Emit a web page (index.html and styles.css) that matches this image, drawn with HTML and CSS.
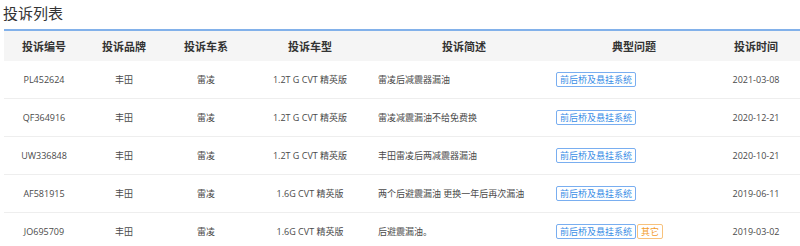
FILE: index.html
```html
<!DOCTYPE html>
<html lang="zh-CN">
<head>
<meta charset="utf-8">
<link rel="stylesheet" href="styles.css">
</head>
<body>
<div class="page">
  <h2 class="title">投诉列表</h2>
  <table class="list">
    <colgroup>
      <col class="c1"><col class="c2"><col class="c3"><col class="c4"><col class="c5"><col class="c6"><col class="c7">
    </colgroup>
    <thead>
      <tr><th>投诉编号</th><th>投诉品牌</th><th>投诉车系</th><th>投诉车型</th><th>投诉简述</th><th>典型问题</th><th>投诉时间</th></tr>
    </thead>
    <tbody>
      <tr><td>PL452624</td><td>丰田</td><td>雷凌</td><td>1.2T G CVT 精英版</td><td class="desc">雷凌后减震器漏油</td><td class="tags"><span class="tag">前后桥及悬挂系统</span></td><td>2021-03-08</td></tr>
      <tr><td>QF364916</td><td>丰田</td><td>雷凌</td><td>1.2T G CVT 精英版</td><td class="desc">雷凌减震漏油不给免费换</td><td class="tags"><span class="tag">前后桥及悬挂系统</span></td><td>2020-12-21</td></tr>
      <tr><td>UW336848</td><td>丰田</td><td>雷凌</td><td>1.2T G CVT 精英版</td><td class="desc">丰田雷凌后两减震器漏油</td><td class="tags"><span class="tag">前后桥及悬挂系统</span></td><td>2020-10-21</td></tr>
      <tr><td>AF581915</td><td>丰田</td><td>雷凌</td><td>1.6G CVT 精英版</td><td class="desc">两个后避震漏油 更换一年后再次漏油</td><td class="tags"><span class="tag">前后桥及悬挂系统</span></td><td>2019-06-11</td></tr>
      <tr><td>JO695709</td><td>丰田</td><td>雷凌</td><td>1.6G CVT 精英版</td><td class="desc">后避震漏油。</td><td class="tags"><span class="tag">前后桥及悬挂系统</span><span class="tag other">其它</span></td><td>2019-03-02</td></tr>
    </tbody>
  </table>
</div>
</body>
</html>
```
FILE: styles.css
```css
html, body {
  margin: 0;
  padding: 0;
  background: #fff;
}
body {
  font-family: "Open Sans", "Noto Sans CJK SC", sans-serif;
  color: #4a4a4a;
}
.page {
  padding: 0 0 0 4px;
}
.title {
  margin: 0 0 0 -1px;
  height: 29px;
  line-height: 25px;
  font-size: 15px;
  font-weight: normal;
  color: #333;
  font-family: "Noto Sans CJK SC", sans-serif;
}
.list {
  width: 796px;
  border-collapse: collapse;
  table-layout: fixed;
  border-top: 2px solid #82b1ea;
}
.c1 { width: 80px; }
.c2 { width: 80px; }
.c3 { width: 84px; }
.c4 { width: 124px; }
.c5 { width: 184px; }
.c6 { width: 156px; }
.c7 { width: 88px; }
.list th {
  height: 30px;
  padding: 0;
  background: #f5f5f5;
  font-family: "Noto Sans CJK SC", sans-serif;
  font-size: 11px;
  font-weight: bold;
  color: #333;
  text-align: center;
}
.list td {
  height: 37px;
  padding: 0;
  font-size: 9px;
  text-align: center;
  border-bottom: 1px solid #eeeeee;
  white-space: nowrap;
}
.list td.desc {
  text-align: left;
  padding-left: 6px;
}
.list td.tags {
  text-align: left;
  padding-left: 0;
}
.tag {
  display: inline-block;
  box-sizing: border-box;
  height: 15px;
  line-height: 13px;
  padding: 0 3px;
  border: 1px solid #79aef0;
  border-radius: 2px;
  color: #3a8ee6;
  font-size: 9px;
  vertical-align: middle;
}
.tag.other {
  margin-left: 1px;
  border-color: #f8c27c;
  color: #f39c2c;
}
```
